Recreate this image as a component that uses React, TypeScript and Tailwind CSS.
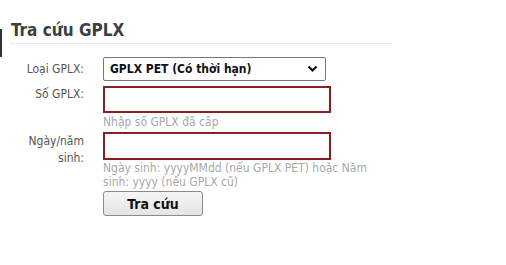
import React from "react";

export default function App() {
  const font = { fontFamily: '"DejaVu Sans Condensed", "DejaVu Sans", Verdana, sans-serif' };
  return (
    <div className="w-[506px] h-[265px] bg-white relative overflow-hidden" style={font}>
      <div className="absolute left-0 top-[29px] w-[2px] h-[28px] bg-[#333]" />
      <div className="pl-[10px] pt-[19px] w-[392px]">
        <h1 className="text-[17px] font-bold text-[#3a3f44] leading-[22px] pl-[1px] pb-[2px] border-b border-[#eaeaea]">
          Tra cứu GPLX
        </h1>
      </div>
      <div className="grid grid-cols-[84px_1fr] gap-x-[19px] mt-[13px] text-[12px] leading-[14px]">
        <div className="text-right text-[#555] pt-[5px]">Loại GPLX:</div>
        <div>
          <div className="w-[223px] h-[24px] border border-[#767676] rounded-[2px] flex items-center justify-between pl-[6px] pr-[7px]">
            <span className="font-bold text-[12px] text-[#111]">GPLX PET (Có thời hạn)</span>
            <svg width="11" height="8" viewBox="0 0 11 8">
              <path d="M1.5 1.5 L5.5 5.5 L9.5 1.5" stroke="#111" strokeWidth="2.2" fill="none" />
            </svg>
          </div>
        </div>
        <div className="text-right text-[#555] pt-[1px] mt-[5px]">Số GPLX:</div>
        <div className="mt-[5px]">
          <div className="w-[228px] h-[27px] border-2 border-[#8b1e1e]" />
          <div className="text-[#a8a8a8] mt-[2px]">Nhập số GPLX đã cấp</div>
        </div>
        <div className="text-right text-[#555] mt-[3px] pt-[1px] leading-[17px]">
          Ngày/năm
          <br />
          sinh:
        </div>
        <div className="mt-[3px]">
          <div className="w-[228px] h-[28px] border-2 border-[#8b1e1e]" />
          <div className="text-[#a8a8a8] mt-[1px] w-[275px]">
            Ngày sinh: yyyyMMdd (nếu GPLX PET) hoặc Năm sinh: yyyy (nếu GPLX cũ)
          </div>
          <button className="mt-[2px] w-[100px] h-[25px] border border-[#8a8a8a] rounded-[3px] bg-gradient-to-b from-[#f6f6f6] to-[#e4e4e4] font-bold text-[14px] text-[#111] flex items-center justify-center">
            Tra cứu
          </button>
        </div>
      </div>
    </div>
  );
}
